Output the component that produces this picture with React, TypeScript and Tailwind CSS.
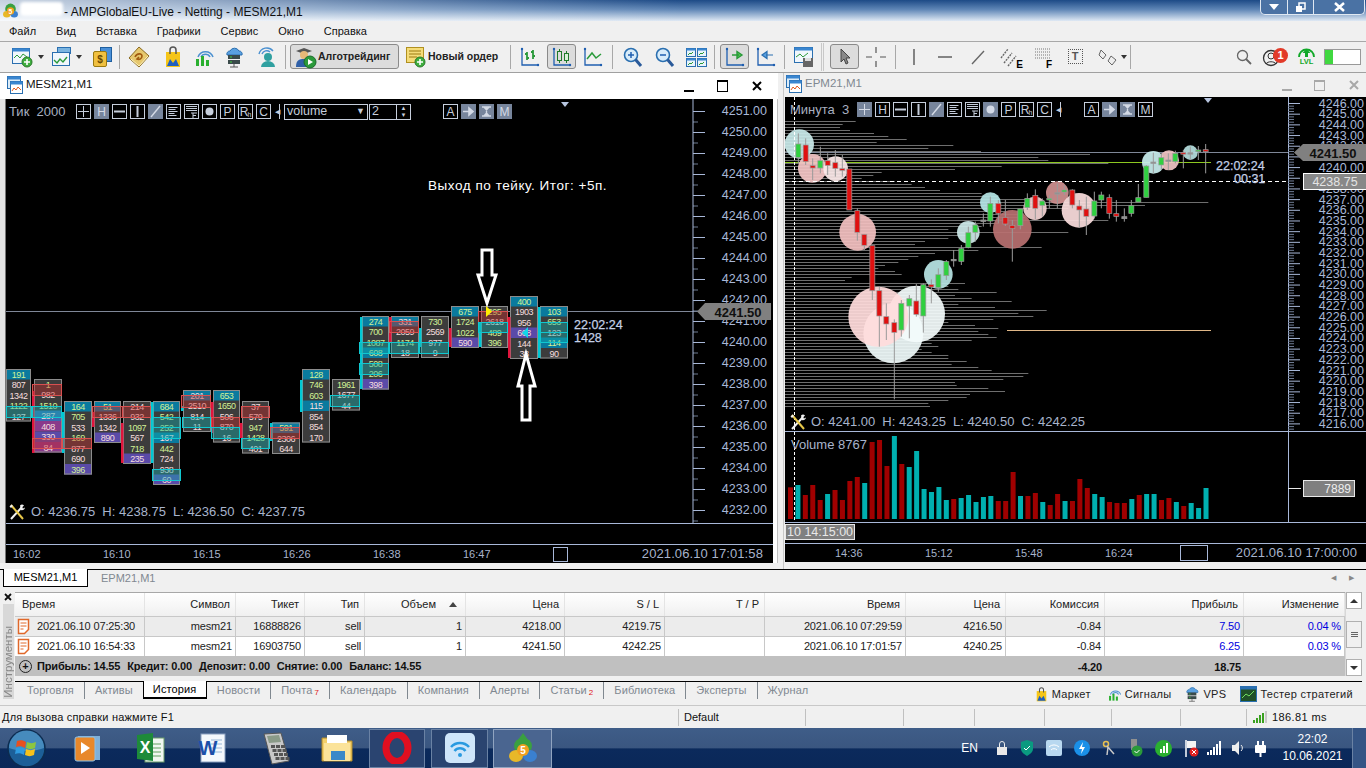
import React from 'react';

// ---------- chart data ----------
type Col = { x: number; y: number; w?: number; v: number[]; head?: boolean; foot?: boolean; bg?: Record<number, string> };

const footprint: Col[] = [
  { x: 6, y: 369, w: 25, v: [191, 807, 1342, 1122, 127], head: true },
  { x: 34, y: 379, v: [1, 982, 1510, 287, 408, 330, 84], bg: { 3: '#3a6ab0', 4: '#8a3a8a', 5: '#5a4aa8', 6: '#8a3a8a' } },
  { x: 64, y: 401, v: [164, 705, 533, 169, 877, 690, 396], head: true, foot: true },
  { x: 94, y: 401, w: 27, v: [51, 1336, 1342, 890], head: true, foot: true },
  { x: 123, y: 401, v: [214, 932, 1097, 567, 718, 235], foot: true },
  { x: 153, y: 401, w: 27, v: [684, 542, 252, 167, 442, 724, 938, 60], head: true, foot: true, bg: { 3: '#0a7a9e' } },
  { x: 183, y: 390, v: [201, 2510, 814, 11], head: true },
  { x: 213, y: 390, w: 27, v: [653, 1650, 506, 870, 16], head: true },
  { x: 242, y: 401, w: 27, v: [37, 579, 947, 1428, 401] },
  { x: 272, y: 422.5, v: [591, 2306, 644], head: true },
  { x: 302, y: 369, v: [128, 746, 603, 115, 854, 854, 170], head: true, bg: { 3: '#0a7a9e' } },
  { x: 332, y: 379, v: [1961, 1677, 44] },
  { x: 362, y: 316, w: 27, v: [274, 700, 1087, 608, 508, 206, 398], head: true, foot: true, bg: { 3: '#0a7a9e' } },
  { x: 391, y: 316, v: [331, 2059, 1174, 18], head: true },
  { x: 421, y: 316, v: [730, 2569, 977, 9] },
  { x: 451, y: 306, v: [675, 1724, 1022, 590], head: true, foot: true },
  { x: 481, y: 306, w: 27, v: [295, 2618, 489, 396] },
  { x: 510, y: 296, v: [400, 1903, 956, 668, 144, 38], head: true, bg: { 3: '#5a4aa8' } },
  { x: 540, y: 306, v: [103, 653, 123, 114, 90], head: true, bg: { 3: '#0a7a9e' } },
];

const greenVals = new Set([191, 1, 1122, 1510, 164, 705, 169, 51, 1097, 718, 684, 542, 252, 442, 653, 1650, 947, 1428, 591, 128, 746, 603, 1961, 274, 700, 1087, 608, 508, 206, 1174, 730, 1022, 675, 1724, 295, 489, 396, 400, 103, 114]);

const redBoxes = [[32, 384, 29, 11], [32, 438, 29, 10], [62, 438, 29, 10], [92, 406, 30, 11], [122, 406, 28, 11], [181, 395, 29, 12], [211, 417, 28, 10], [241, 406, 28, 11], [270, 427, 29, 11], [389, 321, 29, 11], [478, 311, 29, 11]];
const cyanBoxes = [[6, 406, 25, 11], [32, 406, 29, 11], [152, 417, 28, 10], [152, 427, 28, 11], [182, 417, 28, 10], [211, 427, 28, 11], [241, 438, 28, 10], [152, 469, 28, 11], [359, 342, 29, 11], [389, 342, 29, 11], [419, 342, 29, 11], [359, 363, 29, 11], [330, 395, 29, 11], [478, 322, 29, 10], [540, 322, 27, 10], [540, 332, 27, 10]];
const sideBars = [[32, 391, 62, 'r'], [62, 412, 41, 'c'], [92, 412, 15, 'r'], [121, 423, 40, 'r'], [151, 402, 61, 'c'], [181, 406, 5, 'c'], [211, 402, 31, 'r'], [240, 423, 15, 'r'], [270, 423, 18, 'c'], [300, 380, 32, 'c'], [360, 317, 72, 'c'], [389, 317, 25, 'r'], [419, 328, 19, 'c'], [449, 328, 19, 'r'], [479, 322, 25, 'c'], [508, 317, 41, 'r'], [538, 307, 51, 'c']] as [number, number, number, string][];

// x, bodyTop, bodyBottom, wickTop, wickBottom, colour: measured in a 3x crop, see px/py
const candles: [number, number, number, number, number, string][] = [
  [40, 72, 112, 40, 130, 'g'], [62, 75, 125, 55, 135, 'r'], [83, 137, 144, 115, 180, 'r'], [106, 122, 144, 80, 160, 'g'], [128, 122, 136, 100, 165, 'r'], [151, 128, 145, 90, 170, 'r'], [172, 146, 151, 105, 170, 'r'], [193, 147, 270, 147, 270, 'r'], [217, 272, 337, 265, 362, 'r'], [238, 343, 376, 343, 390, 'r'], [262, 377, 512, 377, 540, 'r'], [283, 512, 588, 500, 680, 'r'], [304, 590, 612, 550, 660, 'r'], [328, 608, 637, 598, 838, 'r'], [349, 550, 630, 540, 650, 'g'], [373, 536, 558, 525, 655, 'g'], [394, 543, 583, 492, 590, 'r'], [415, 494, 588, 490, 638, 'g'], [439, 494, 501, 478, 550, 'r'], [460, 464, 503, 445, 515, 'g'], [484, 425, 467, 420, 480, 'g'], [506, 418, 420, 390, 440, 'k'], [529, 386, 424, 375, 435, 'g'], [550, 338, 383, 320, 385, 'g'], [571, 315, 337, 305, 365, 'g'], [595, 300, 302, 280, 320, 'k'], [616, 250, 303, 230, 320, 'g'], [640, 250, 280, 240, 310, 'r'], [661, 292, 312, 240, 318, 'r'], [682, 316, 326, 300, 425, 'r'], [706, 267, 317, 267, 328, 'g'], [727, 235, 263, 220, 270, 'g'], [751, 226, 265, 208, 298, 'r'], [772, 243, 256, 235, 290, 'g'], [793, 235, 240, 225, 265, 'g'], [817, 218, 222, 190, 265, 'k'], [838, 210, 216, 195, 225, 'g'], [862, 210, 255, 208, 265, 'r'], [883, 258, 270, 240, 323, 'r'], [904, 267, 289, 230, 345, 'r'], [928, 243, 288, 215, 295, 'g'], [949, 225, 240, 215, 265, 'g'], [973, 233, 280, 223, 296, 'r'], [994, 281, 289, 240, 305, 'r'], [1018, 290, 296, 265, 305, 'k'], [1039, 257, 280, 240, 290, 'g'], [1060, 233, 246, 192, 246, 'g'], [1084, 138, 232, 135, 232, 'g'], [1105, 126, 130, 98, 160, 'k'], [1129, 113, 135, 100, 150, 'g'], [1150, 120, 122, 100, 150, 'k'], [1171, 100, 125, 92, 130, 'g'], [1195, 98, 102, 90, 145, 'r'], [1216, 98, 101, 80, 120, 'k'], [1240, 90, 95, 78, 120, 'g'], [1262, 89, 95, 72, 160, 'r'],
];

const bubbles: [number, number, number, string][] = [
  [325, 640, 90, '#eef9f9'], [395, 582, 85, '#f3fbfb'], [280, 590, 90, '#ffdcdc'], [43, 72, 44, '#c9eaea'], [82, 145, 43, '#f3c5c5'], [152, 146, 37, '#fbe8e8'], [218, 337, 55, '#f2c0c0'], [460, 463, 43, '#b8e4e4'], [550, 337, 34, '#cdeaea'], [616, 248, 31, '#b5e5e5'], [682, 328, 58, '#b87070'], [750, 265, 35, '#f4d4d4'], [817, 218, 34, '#d09090'], [882, 271, 52, '#fadddd'], [1105, 127, 34, '#c9eeee'], [1152, 121, 30, '#f0c4c4'], [1216, 98, 22, '#b5dede'],
];

const profile = [212, 173, 165, 195, 267, 310, 365, 275, 505, 430, 588, 915, 760, 790, 970, 650, 510, 290, 265, 230, 330, 380, 420, 465, 590, 640, 720, 1270, 1080, 850, 660, 700, 720, 970, 640, 590, 490, 850, 560, 490, 420, 390, 770, 580, 450, 400, 370, 340, 300, 280, 330, 350, 200, 180, 540, 490, 520, 635, 510, 560, 680, 520, 630, 785, 700, 745, 625, 490, 570, 640, 580, 610, 635, 560, 440, 460, 410, 440, 490, 490, 545, 500, 580, 620, 730, 715, 655, 510, 515, 610, 660, 555, 545, 490, 430, 435];

const volume: [number, string][] = [[172, 'r'], [165, 't'], [195, 'r'], [165, 'r'], [210, 'r'], [192, 't'], [180, 'r'], [210, 'r'], [153, 'r'], [141, 'r'], [159, 't'], [36, 'r'], [30, 'r'], [108, 'r'], [18, 't'], [102, 'r'], [111, 't'], [63, 't'], [177, 't'], [186, 't'], [171, 't'], [210, 't'], [207, 'r'], [204, 't'], [195, 't'], [216, 't'], [201, 't'], [198, 't'], [213, 'r'], [213, 'r'], [126, 'r'], [198, 't'], [198, 'r'], [189, 'r'], [216, 't'], [225, 'r'], [192, 'r'], [213, 't'], [213, 'r'], [147, 'r'], [174, 'r'], [192, 't'], [201, 't'], [216, 'r'], [219, 'r'], [219, 'r'], [207, 't'], [195, 'r'], [192, 't'], [192, 't'], [210, 'r'], [204, 'r'], [216, 't'], [228, 'r'], [219, 't'], [234, 't'], [174, 't']];

const range = (n: number) => Array.from({ length: n }, (_, i) => i);

// ---------- small glyphs for the chart panel buttons ----------
function Glyph({ name }: { name: string }) {
  const s = 'currentColor';
  return (
    <svg width="13" height="13" viewBox="0 0 13 13" fill="none" stroke={s}>
      {name === 'plus' && <path d="M6.5 1v11M1 6.5h11" />}
      {name === 'hline' && <path d="M1 6.5h11" strokeWidth="2" />}
      {name === 'vline' && <path d="M6.5 1v11" strokeWidth="2" />}
      {name === 'diag' && <path d="M2 12L11 1" strokeWidth="1.4" />}
      {name === 'lines' && <path d="M1.5 2.5h9M1.5 4.5h7M1.5 6.5h9M1.5 8.5h6M1.5 10.5h8" />}
      {name === 'flines' && <path d="M1 1.5h11M1 3.5h11M1 5.5h11M6 8h6M8 8v5M8 10.5h3" />}
      {name === 'dot' && <circle cx="6.5" cy="6.5" r="4" fill={s} stroke="none" />}
      {name === 'arrow' && <path d="M1 6.5h7M7 3l4 3.5-4 3.5z" fill={s} strokeWidth="1.6" />}
      {name === 'ibeam' && <path d="M2 2h9M2 11h9M6.5 2v9M4 2l2.5 3L9 2M4 11l2.5-3L9 11" strokeWidth="1.4" />}
    </svg>
  );
}

function Btn({ t, g, on }: { t?: React.ReactNode; g?: string; on?: boolean }) {
  return (
    <div className={`w-[15px] h-[15px] flex items-center justify-center border text-[12px] leading-none ${on ? 'bg-[#77859c] border-[#77859c] text-[#d4dae6]' : 'border-[#c6cedc] text-[#c6cedc]'}`}>
      {g ? <Glyph name={g} /> : t}
    </div>
  );
}

function Wrench({ className }: { className?: string }) {
  return (
    <svg className={className} width="18" height="18" viewBox="0 0 18 18" fill="none">
      <path d="M3 16L14 4" stroke="#f2f2f2" strokeWidth="2" />
      <path d="M12 2.5a3 3 0 0 1 4 0l-2 2 1 1 2-1a3 3 0 0 1-4 2.5z" fill="#f2f2f2" />
      <path d="M3 2l12 14" stroke="#e8c84a" strokeWidth="2" />
      <path d="M1.5 3.5L3.5 1.5 5 3 3 5z" fill="#f2f2f2" />
    </svg>
  );
}

// ---------- left chart ----------
function FootprintPlot() {
  return (
    <svg width="767" height="424" viewBox="6 99 767 424" className="block">
      <line x1="6" x2="700" y1="311.5" y2="311.5" stroke="#7f8798" />
      {range(20).map((i) => (
        <g key={i}>
          <line x1="693" x2="705" y1={111.5 + 21 * i} y2={111.5 + 21 * i} stroke="#a8b8d8" />
          <line x1="693" x2="698" y1={122 + 21 * i} y2={122 + 21 * i} stroke="#6f7c94" />
          <text x="767" y={111 + 21 * i} textAnchor="end" dominantBaseline="central" fontSize="12.5" fill="#a8b8d8">{(4251 - i).toFixed(2)}</text>
        </g>
      ))}
      <line x1="693" x2="693" y1="99" y2="523" stroke="#a8b8d8" />
      <polygon points="697,311.5 705,303 771,303 771,320 705,320" fill="#808080" />
      <text x="738" y="312" textAnchor="middle" dominantBaseline="central" fontSize="13" fontWeight="700" fill="#101010">4241.50</text>

      {footprint.map((c, k) => {
        const w = c.w ?? 28;
        const h = 10.5;
        return (
          <g key={k}>
            <rect x={c.x} y={c.y} width={w} height={c.v.length * h} fill="#3c3c3c" />
            {c.v.map((v, i) => {
              const fill = c.bg?.[i] ?? (c.head && i === 0 ? '#0a7a9e' : c.foot && i === c.v.length - 1 ? '#5a4aa8' : null);
              return (
                <g key={i}>
                  {fill && <rect x={c.x} y={c.y + i * h} width={w} height={h} fill={fill} />}
                  <text x={c.x + w / 2} y={c.y + i * h + h / 2 + 0.5} textAnchor="middle" dominantBaseline="central" fontSize="9" letterSpacing="-0.5" fill={greenVals.has(v) ? '#d2f296' : '#f6dede'}>{v}</text>
                </g>
              );
            })}
            <rect x={c.x + 0.5} y={c.y + 0.5} width={w - 1} height={c.v.length * h - 1} fill="none" stroke="#8c8c8c" />
          </g>
        );
      })}
      {sideBars.map(([x, y, h, t], i) => (
        <rect key={i} x={x} y={y} width="2.5" height={h} fill={t === 'r' ? '#e0143c' : '#00c8d4'} />
      ))}
      {redBoxes.map(([x, y, w, h], i) => (
        <rect key={i} x={x + 0.5} y={y + 0.5} width={w} height={h} fill="#c82828" fillOpacity="0.4" stroke="#d85050" />
      ))}
      {cyanBoxes.map(([x, y, w, h], i) => (
        <rect key={i} x={x + 0.5} y={y + 0.5} width={w} height={h} fill="#10b0b0" fillOpacity="0.4" stroke="#10c8d0" />
      ))}

      <polygon points="482,250 492,250 492,275 496,275 487,303 478,275 482,275" fill="#000" stroke="#fff" strokeWidth="3" />
      <polygon points="486,306 492,311.5 486,317" fill="#ffee00" />
      <polygon points="528,327 522,333 528,338" fill="#10d8e8" />
      <polygon points="522,420 530,420 530,386 535,386 526,354 518,386 522,386" fill="#000" stroke="#fff" strokeWidth="3" />

      <text x="428" y="185" dominantBaseline="central" fontSize="13.5" letterSpacing="0.55" fill="#fff">Выход по тейку. Итог: +5п.</text>
      <text x="574" y="324.5" dominantBaseline="central" fontSize="12.5" fill="#c4d0e6" stroke="#c4d0e6" strokeWidth="0.25">22:02:24</text>
      <text x="574" y="337.5" dominantBaseline="central" fontSize="12.5" fill="#c4d0e6" stroke="#c4d0e6" strokeWidth="0.25">1428</text>
    </svg>
  );
}

function LeftChart() {
  return (
    <div className="relative w-[767px] h-[464px] bg-black flex flex-col text-[#a8b4cc]">
      <FootprintPlot />
      <div className="absolute left-[3px] top-[5px] flex items-center h-[15px]">
        <div className="w-[67px] text-[13px] text-[#a8b0c0]">Тик&nbsp; 2000</div>
        <PanelBtns left />
        <div className="ml-[4px] w-[84px] h-[16px] border border-[#c6cedc] text-[12.5px] pl-[2px] flex items-center justify-between pr-[2px] text-[#c6cedc]">volume<span className="text-[9px]">▼</span></div>
        <div className="ml-[1px] w-[42px] h-[16px] border border-[#c6cedc] text-[12.5px] pl-[2px] flex items-center justify-between text-[#c6cedc]">
          2
          <div className="w-[14px] h-full border-l border-[#c6cedc] flex flex-col items-center justify-around text-[6px] leading-[6px]"><span>▲</span><span>▼</span></div>
        </div>
        <div className="ml-[32px] flex gap-[3px]">
          <Btn t="A" />
          <Btn g="arrow" on />
          <Btn g="ibeam" on />
          <Btn t="M" on />
        </div>
      </div>
      <div className="absolute left-[555px] top-[3px] w-0 h-0 border-x-[4px] border-x-transparent border-t-[5px] border-t-[#b8c6e0]" />
      <div className="absolute left-[2px] top-[404px] flex items-center gap-[5px] text-[13px] leading-none">
        <Wrench />
        <span className="flex gap-[7px] -mt-[1px]"><span>O: 4236.75</span><span>H: 4238.75</span><span>L: 4236.50</span><span>C: 4237.75</span></span>
      </div>
      <div className="h-[21px] border-t border-[#a8b8d8]" />
      <div className="h-[19px] border-t border-[#a8b8d8] flex items-center pl-[7px] text-[11px] relative">
        {['16:02', '16:10', '16:15', '16:26', '16:38', '16:47'].map((t) => (
          <div key={t} className="w-[90px]">{t}</div>
        ))}
        <div className="w-[15px] h-[15px] border border-[#a8b8d8]" />
        <div className="ml-auto pr-[10px] text-[13px] tracking-[0.1px]">2021.06.10 17:01:58</div>
      </div>
    </div>
  );
}

function PanelBtns({ left }: { left?: boolean }) {
  return (
    <div className="flex items-center gap-[3px]">
      <Btn g="plus" on={!left} />
      <Btn t="H" on={left} />
      <Btn g="hline" />
      <Btn g="vline" />
      <Btn g="diag" on />
      <Btn g="lines" />
      <Btn g="flines" />
      {left ? <Btn g="dot" /> : <Btn g="dot" on />}
      <Btn t="P" />
      <Btn t={<span className="flex items-end">R<span className="text-[7px] -ml-[1px]">h</span></span>} />
      <Btn t="C" />
      <div className="ml-[1px] w-[5px] h-[15px] border-r border-[#c6cedc] text-[#c6cedc] text-[7px] leading-[15px]">◀</div>
    </div>
  );
}

// ---------- right chart ----------
function CandlePlot() {
  const px = (z: number) => 785 + z / 3;
  const py = (z: number) => 120 + z / 3;
  return (
    <svg width="581" height="334" viewBox="785 97 581 334" className="block">
      {profile.map((l, i) => (
        <line key={i} x1="785" x2={785 + l / 3} y1={121.5 + 3 * i} y2={121.5 + 3 * i} stroke="#6e6e6e" />
      ))}
      <line x1="785" x2="1288" y1="152.5" y2="152.5" stroke="#7f8798" />
      <line x1="785" x2="1211" y1="162.5" y2="162.5" stroke="#8cc820" />
      <line x1="1007" x2="1211" y1="330.5" y2="330.5" stroke="#e0b888" />
      {bubbles.map(([x, y, r, c], i) => (
        <circle key={i} cx={px(x)} cy={py(y)} r={r / 3} fill={c} fillOpacity="0.93" />
      ))}
      <line x1="785" x2="1303" y1="181.5" y2="181.5" stroke="#fff" strokeDasharray="4 3" />
      <line x1="794.5" x2="794.5" y1="97" y2="431" stroke="#fff" strokeDasharray="3 2" />
      {candles.map(([x, t, b, wt, wb, c], i) => (
        <g key={i}>
          <line x1={px(x)} x2={px(x)} y1={py(wt)} y2={py(wb)} stroke="#9a9a9a" />
          <rect x={px(x) - 2.5} y={py(t)} width="5" height={Math.max((b - t) / 3, 1.5)} fill={c === 'r' ? '#e01010' : c === 'g' ? '#30d040' : '#909090'} stroke="#9a9a9a" strokeWidth="0.7" />
        </g>
      ))}

      <rect x="1288" y="97" width="78" height="334" fill="#000" />
      <line x1="1288.5" x2="1288.5" y1="97" y2="431" stroke="#a8b8d8" />
      {range(31).map((i) => {
        const y = 103.5 + 10.68 * i;
        const price = 4246 - i;
        return (
          <g key={i}>
            <line x1="1288" x2="1300" y1={y} y2={y} stroke="#a8b8d8" />
            <line x1="1288" x2="1294" y1={y + 2.7} y2={y + 2.7} stroke="#6f7c94" />
            <line x1="1288" x2="1294" y1={y + 5.3} y2={y + 5.3} stroke="#6f7c94" />
            <line x1="1288" x2="1294" y1={y + 8} y2={y + 8} stroke="#6f7c94" />
            {/* 4241 and 4239 sit under the two price tags */}
            {price !== 4241 && price !== 4239 && (
              <text x="1364" y={y} textAnchor="end" dominantBaseline="central" fontSize="12.5" fill="#a8b8d8">{price.toFixed(2)}</text>
            )}
          </g>
        );
      })}
      <polygon points="1294,152.5 1303,144 1366,144 1366,161 1303,161" fill="#808080" />
      <text x="1333" y="153" textAnchor="middle" dominantBaseline="central" fontSize="13" fontWeight="700" fill="#101010">4241.50</text>
      <rect x="1303.5" y="173.5" width="63" height="16" fill="#888" stroke="#fff" />
      <text x="1335" y="181.5" textAnchor="middle" dominantBaseline="central" fontSize="12.5" fill="#e4e4e4">4238.75</text>

      <text x="1216" y="166" dominantBaseline="central" fontSize="12.5" fill="#c4d0e6" stroke="#c4d0e6" strokeWidth="0.25">22:02:24</text>
      <rect x="1232" y="173" width="34" height="8" fill="#000" />
      <text x="1234" y="178.5" dominantBaseline="central" fontSize="12.5" fill="#c4d0e6" stroke="#c4d0e6" strokeWidth="0.25">00:31</text>
    </svg>
  );
}

function VolumePlot() {
  return (
    <svg width="581" height="90" viewBox="785 432 581 90" className="block">
      <line x1="794.5" x2="794.5" y1="432" y2="522" stroke="#fff" strokeDasharray="3 2" />
      {volume.map(([t, c], i) => {
        const y = 430 + t / 3;
        return <rect key={i} x={788 + 7.42 * i} y={y} width="5" height={519 - y} fill={c === 'r' ? '#a00000' : '#00b0b0'} />;
      })}
      <line x1="1288.5" x2="1288.5" y1="432" y2="522" stroke="#a8b8d8" />
      <line x1="1288" x2="1301" y1="488.5" y2="488.5" stroke="#e8e8e8" />
      <rect x="1303.5" y="480.5" width="51" height="16" fill="#808080" stroke="#e8e8e8" />
      <text x="1351" y="489" textAnchor="end" dominantBaseline="central" fontSize="12" fill="#eee">7889</text>
    </svg>
  );
}

function RightChart() {
  return (
    <div className="relative w-[581px] h-[465px] bg-black flex flex-col text-[#a8b4cc]">
      <CandlePlot />
      <div className="absolute left-[5px] top-[5px] flex items-center h-[15px]">
        <div className="w-[67px] text-[13px] text-[#a8b0c0]">Минута&nbsp; 3</div>
        <PanelBtns />
        <div className="ml-[23px] flex gap-[3px]">
          <Btn t="A" />
          <Btn g="arrow" on />
          <Btn g="ibeam" on />
          <Btn t="M" />
        </div>
      </div>
      <div className="absolute left-[419px] top-[1px] w-0 h-0 border-x-[4px] border-x-transparent border-t-[5px] border-t-[#b8c6e0]" />
      <div className="absolute left-[4px] top-[316px] flex items-center gap-[4px] text-[13px] leading-none">
        <Wrench />
        <span className="flex gap-[7px] -mt-[1px]"><span>O: 4241.00</span><span>H: 4243.25</span><span>L: 4240.50</span><span>C: 4242.25</span></span>
      </div>
      <div className="absolute left-[6px] top-[341px] text-[13px] leading-none">Volume 8767</div>
      <div className="border-t border-[#a8b8d8]"><VolumePlot /></div>
      <div className="h-[21px] border-t border-[#a8b8d8] relative">
        <div className="absolute left-0 top-[1px] w-[70px] h-[16px] bg-[#808080] border border-[#e8e8e8] text-[#e8e8e8] text-[12.5px] leading-[14px] pl-[1px] whitespace-nowrap overflow-hidden">10 14:15:00</div>
      </div>
      <div className="h-[19px] border-t border-[#a8b8d8] flex items-center pl-[50px] text-[11px]">
        {['14:36', '15:12', '15:48', '16:24'].map((t) => (
          <div key={t} className="w-[90px]">{t}</div>
        ))}
        <div className="w-[28px] h-[16px] -ml-[15px] border border-[#a8b8d8]" />
        <div className="ml-auto pr-[9px] text-[13px] tracking-[0.1px]">2021.06.10 17:00:00</div>
      </div>
    </div>
  );
}

// ---------- toolbar icons ----------
const Ico = ({ children, className = '' }: { children: React.ReactNode; className?: string }) => (
  <svg className={`shrink-0 ${className}`} width="22" height="22" viewBox="0 0 22 22" fill="none">{children}</svg>
);

const PlusBadge = () => (
  <g>
    <circle cx="16" cy="16" r="5" fill="#3fae3f" stroke="#2a7a2a" />
    <path d="M13 16h6M16 13v6" stroke="#fff" strokeWidth="1.6" />
  </g>
);

const NewChart = () => (
  <Ico>
    <rect x="1.5" y="2.5" width="17" height="15" fill="#f0f6fc" stroke="#2a6fb0" />
    <rect x="1.5" y="2.5" width="17" height="3" fill="#3a86d0" />
    <path d="M3 12l3-3 3 3 3-4 4 3" stroke="#2a9a3a" />
    <PlusBadge />
  </Ico>
);
const Profiles = () => (
  <Ico>
    <rect x="6.5" y="1.5" width="13" height="6" fill="#7ab4e0" stroke="#2a6fb0" />
    <rect x="1.5" y="6.5" width="17" height="13" fill="#f0f6fc" stroke="#2a6fb0" />
    <path d="M3 14l3 3 3-4 3 3 4-5" stroke="#2a9a3a" strokeWidth="1.4" />
  </Ico>
);
const Money = () => (
  <Ico>
    <rect x="9.5" y="1.5" width="11" height="14" fill="#4a90d8" stroke="#1f5f9f" />
    <rect x="2.5" y="5.5" width="13" height="15" rx="1.5" fill="#f0c040" stroke="#9a7a10" />
    <text x="9" y="17" textAnchor="middle" fontSize="10" fill="#6a4a00" fontWeight="700">$</text>
  </Ico>
);
const Book = () => (
  <Ico>
    <path d="M11 1l10 9-10 11L1 12z" fill="#e6c86e" stroke="#8a6a20" />
    <path d="M3 13l8 7 9-10" stroke="#fff3c0" />
    <path d="M7 11c2-4 7-4 7-1s-3 4-5 3l2-2" stroke="#a05a10" strokeWidth="1.6" />
  </Ico>
);
const Bag = ({ s = 22 }: { s?: number }) => (
  <svg className="shrink-0" width={s} height={s} viewBox="0 0 22 22" fill="none">
    <rect x="4" y="6" width="14" height="15" fill="#f5c518" />
    <path d="M8 8V4a3 3 0 0 1 6 0v4" stroke="#555" strokeWidth="1.5" />
    <path d="M5 20l3-7 3 4 3-4 3 7z" fill="#1f5fc0" />
  </svg>
);
const Signal = ({ s = 22 }: { s?: number }) => (
  <svg className="shrink-0" width={s} height={s} viewBox="0 0 22 22" fill="none">
    <path d="M5 11a8 8 0 0 1 15 0M8 11a5 5 0 0 1 9 0" stroke="#4a90d0" strokeWidth="1.5" />
    <rect x="3" y="13" width="3" height="7" fill="#2ab030" />
    <rect x="8" y="10" width="3" height="10" fill="#2ab030" />
    <rect x="13" y="14" width="3" height="6" fill="#2ab030" />
  </svg>
);
const Vps = ({ s = 22 }: { s?: number }) => (
  <svg className="shrink-0" width={s} height={s} viewBox="0 0 22 22" fill="none">
    <path d="M4 9a3 3 0 0 1 3-4 5 5 0 0 1 9 0 3 3 0 0 1 3 4z" fill="#5aa0e0" stroke="#2a6fb0" />
    <rect x="5" y="9" width="12" height="4" fill="#3a4a4a" />
    <rect x="5" y="14" width="12" height="4" fill="#3a4a4a" />
    <path d="M7 11h2M7 16h2" stroke="#40d040" />
    <path d="M11 18v3M7 21h8" stroke="#555" />
  </svg>
);
const Person = () => (
  <Ico>
    <path d="M3 8a8 8 0 0 1 14-3M6 8a5 5 0 0 1 8-2" stroke="#4a90d0" strokeWidth="1.4" />
    <circle cx="12" cy="11" r="4" fill="#30a0a0" />
    <path d="M5 21a7 6 0 0 1 14 0z" fill="#30a0a0" />
  </Ico>
);
const Algo = () => (
  <svg className="shrink-0" width="24" height="24" viewBox="0 0 24 24" fill="none">
    <path d="M3 6l8-3 8 3-8 3z" fill="#555" />
    <circle cx="11" cy="10" r="4" fill="#e8b878" />
    <path d="M3 22c0-7 3-8 8-8s6 2 6 8z" fill="#3060a8" />
    <circle cx="17" cy="17" r="6" fill="#2a9a3a" stroke="#1a6a2a" />
    <path d="M15 14l5 3-5 3z" fill="#fff" />
  </svg>
);
const NewOrder = () => (
  <Ico>
    <rect x="2.5" y="1.5" width="17" height="15" fill="#f5dc78" stroke="#b09020" />
    <path d="M5 5h12M5 8h12M5 11h8" stroke="#9a7a10" />
    <PlusBadge />
  </Ico>
);
const Axes = ({ children }: { children: React.ReactNode }) => (
  <Ico>
    <path d="M3 2v17h17" stroke="#1f5fb0" strokeWidth="1.3" />
    <circle cx="3" cy="3" r="1.2" fill="#1f5fb0" />
    <circle cx="19" cy="19" r="1.2" fill="#1f5fb0" />
    {children}
  </Ico>
);
const Zoom = ({ plus }: { plus?: boolean }) => (
  <Ico>
    <circle cx="9" cy="9" r="6.5" fill="#d8ecfa" stroke="#2a6fb0" strokeWidth="1.6" />
    <path d="M6 9h6" stroke="#1f5fb0" strokeWidth="1.5" />
    {plus && <path d="M9 6v6" stroke="#1f5fb0" strokeWidth="1.5" />}
    <path d="M13.5 13.5L19 20" stroke="#2a5a9a" strokeWidth="3" />
  </Ico>
);
const Tile = () => (
  <Ico>
    {[[1, 2], [12, 2], [1, 12], [12, 12]].map(([x, y]) => (
      <g key={`${x}${y}`}>
        <rect x={x + 0.5} y={y + 0.5} width="9" height="8" fill="#e8f3fb" stroke="#2a6fb0" />
        <rect x={x + 0.5} y={y + 0.5} width="9" height="2" fill="#3a86d0" />
        <path d={`M${x + 2} ${y + 7}l2-2 1 1 2-2`} stroke="#2a9a3a" />
      </g>
    ))}
  </Ico>
);
const Save = () => (
  <Ico>
    <rect x="1.5" y="1.5" width="18" height="15" fill="#f0f6fc" stroke="#2a6fb0" />
    <rect x="1.5" y="1.5" width="18" height="3" fill="#3a86d0" />
    <path d="M3 11l4-3 3 3 5-4" stroke="#2a9a3a" />
    <rect x="10" y="12" width="10" height="9" fill="#666" />
    <rect x="12" y="12" width="6" height="3" fill="#ddd" />
  </Ico>
);
const Sep = ({ className }: { className: string }) => <div className={`w-px h-[24px] bg-[#a8a8a8] shrink-0 ${className}`} />;
const Caret = ({ className }: { className: string }) => <div className={`w-[7px] flex justify-center shrink-0 ${className}`}><div className="w-0 h-0 border-x-[3.5px] border-x-transparent border-t-[4px] border-t-[#333]" /></div>;
const ActiveBtn = ({ children, className }: { children: React.ReactNode; className: string }) => (
  <div className={`h-[25px] shrink-0 flex items-center rounded-[3px] border border-[#8a8a8a] bg-[#dcdcdc] ${className}`}>{children}</div>
);

function Toolbar() {
  return (
    <div className="h-[31px] flex items-center border-b border-[#a0a0a0] bg-[#f0f0f0] pb-[1px]">
      <div className="ml-[11px]"><NewChart /></div>
      <Caret className="ml-[4px]" />
      <div className="ml-[7px]"><Profiles /></div>
      <Caret className="ml-[2px]" />
      <div className="ml-[9px]"><Money /></div>
      <Sep className="ml-[6px]" />
      <div className="ml-[8px]"><Book /></div>
      <div className="ml-[12px]"><Bag /></div>
      <div className="ml-[9px]"><Signal /></div>
      <div className="ml-[8px]"><Vps /></div>
      <div className="ml-[11px]"><Person /></div>
      <Sep className="ml-[7px]" />
      <ActiveBtn className="ml-[4px] w-[109px] pl-[2px] gap-[1px] font-bold text-[10.5px] text-[#222]"><Algo /><span>Алготрейдинг</span></ActiveBtn>
      <div className="ml-[5px]"><NewOrder /></div>
      <span className="ml-[2px] w-[75px] font-bold text-[10.5px] text-[#222] whitespace-nowrap">Новый ордер</span>
      <Sep className="ml-[7px]" />
      <div className="ml-[8px]"><Axes><path d="M8 6v8M6 8h2M8 12h2M14 4v9M12 6h2M14 10h2" stroke="#2a9a3a" strokeWidth="1.8" /></Axes></div>
      <ActiveBtn className="ml-[6px] w-[29px] justify-center"><Axes><path d="M8.5 3v14M15.5 5v12" stroke="#1f7a2a" /><rect x="6.5" y="5.5" width="4" height="9" fill="#dcdcdc" stroke="#1f7a2a" /><rect x="13.5" y="7.5" width="4" height="7" fill="#d8f0d8" stroke="#1f7a2a" /></Axes></ActiveBtn>
      <div className="ml-[6px]"><Axes><path d="M5 13l5-6 4 5 5-4" stroke="#2a9a3a" strokeWidth="1.5" /></Axes></div>
      <Sep className="ml-[8px]" />
      <div className="ml-[9px]"><Zoom plus /></div>
      <div className="ml-[10px]"><Zoom /></div>
      <div className="ml-[9px]"><Tile /></div>
      <Sep className="ml-[7px]" />
      <ActiveBtn className="ml-[5px] w-[29px] justify-center"><Axes><path d="M8 9h7M13 5.5l5 3.5-5 3.5z" fill="#50c850" stroke="#2a9a3a" strokeWidth="1.4" /></Axes></ActiveBtn>
      <div className="ml-[6px]"><Axes><path d="M18 9h-7M12 5.5L7 9l5 3.5z" fill="#5aa0e0" stroke="#2a6fb0" strokeWidth="1.2" /></Axes></div>
      <Sep className="ml-[7px]" />
      <div className="ml-[8px]"><Save /></div>
      <div className="ml-[6px] w-[3px] h-[28px] border-x border-[#c8c8c8] shrink-0" />
      <ActiveBtn className="ml-[6px] w-[29px] justify-center"><svg width="16" height="18" viewBox="0 0 16 18"><path d="M4 1v13l3-3 2 5 2-1-2-5h4z" fill="#888" stroke="#444" /></svg></ActiveBtn>
      <div className="ml-[6px]"><Ico><path d="M11 1v6M11 15v6M1 11h6M15 11h6" stroke="#555" strokeWidth="1.2" /></Ico></div>
      <Sep className="ml-[8px]" />
      <div className="ml-[7px]"><Ico><path d="M11 3v16" stroke="#555" strokeWidth="1.4" /></Ico></div>
      <div className="ml-[9px]"><Ico><path d="M4 11h14" stroke="#555" strokeWidth="1.4" /></Ico></div>
      <div className="ml-[11px]"><Ico><path d="M5 18L17 5" stroke="#666" strokeWidth="1.4" /></Ico></div>
      <div className="ml-[10px] relative"><Ico><path d="M2 12l7-9M5 17l8-10M9 20l8-10" stroke="#666" strokeWidth="1.4" strokeDasharray="2 1" /></Ico><span className="absolute right-[-2px] bottom-[-2px] text-[10px] font-bold text-black leading-none">E</span></div>
      <div className="ml-[12px] relative"><Ico><path d="M2 3h16M2 6h16M2 9h16M2 12h16" stroke="#777" strokeDasharray="1 1" /></Ico><span className="absolute right-[3px] bottom-[-2px] text-[10px] font-bold text-black leading-none">F</span></div>
      <div className="ml-[9px] w-[22px] flex justify-center"><div className="w-[15px] h-[15px] border border-dotted border-[#555] flex items-center justify-center text-[11px] font-bold text-[#555] leading-none">T</div></div>
      <div className="ml-[11px]"><Ico><path d="M4 4l5 5-3 4-4-4zM14 10l5 4-4 5-4-4z" fill="#eee" stroke="#666" /></Ico></div>
      <Caret className="ml-[1px]" />
      <Sep className="ml-[3px]" />
      <div className="ml-[105px]"><svg width="16" height="16" viewBox="0 0 16 16" fill="none"><circle cx="6.5" cy="6.5" r="5" stroke="#666" strokeWidth="1.3" /><path d="M10 10l5 5" stroke="#666" strokeWidth="1.8" /></svg></div>
      <div className="ml-[10px] relative w-[26px] h-[20px]">
        <svg width="18" height="18" viewBox="0 0 18 18" fill="none" className="mt-[2px]"><circle cx="9" cy="9" r="7.5" stroke="#333" strokeWidth="1.3" /><circle cx="9" cy="7" r="3" stroke="#333" /><path d="M4 15c1-3 9-3 10 0" stroke="#333" /></svg>
        <div className="absolute right-0 top-[1px] w-[15px] h-[15px] rounded-full bg-[#e23a28] text-white text-[11px] font-bold flex items-center justify-center leading-none">1</div>
      </div>
      <div className="ml-[10px] w-[17px] flex flex-col items-center">
        <svg width="17" height="11" viewBox="0 0 17 11" fill="none"><path d="M1 10a7.5 7.5 0 0 1 15 0" stroke="#10a828" strokeWidth="1.8" /><path d="M8.5 2l4 4h-2.5v4H7V6H4.5z" fill="#10a828" /></svg>
        <span className="text-[7.5px] font-bold text-[#10a828] leading-[8px]">LVL</span>
      </div>
      <div className="ml-[9px] w-[37px] h-[16px] border border-[#999] bg-white"><div className="w-[8px] h-full bg-[#40d840]" /></div>
    </div>
  );
}

function WindowIcon() {
  return (
    <svg width="17" height="20" viewBox="0 0 17 20" fill="none" className="shrink-0">
      <rect x="0.5" y="0.5" width="13" height="12" fill="#dcecf8" stroke="#2a6fb0" />
      <rect x="0.5" y="0.5" width="13" height="3" fill="#3a86d0" />
      <rect x="3.5" y="5.5" width="12" height="12" fill="#fff" stroke="#2a6fb0" />
      <rect x="3.5" y="5.5" width="12" height="3" fill="#3a86d0" />
      <path d="M5 15l2-3 2 2 2-3 3 3" stroke="#e05a20" />
    </svg>
  );
}

function LeftWindow() {
  return (
    <div className="w-[778px] h-full flex flex-col bg-[#f0f0f0]">
      <div className="h-[26px] bg-white flex items-center pl-[7px] pr-[16px] text-[11.5px] text-[#111] relative">
        <WindowIcon />
        <span className="ml-[2px] -mt-[2px]">MESM21,M1</span>
        <div className="ml-auto flex items-center text-black">
          <div className="w-[10px] h-[2px] bg-black mt-[9px]" />
          <div className="ml-[23px] w-[11px] h-[12px] border border-black border-t-2" />
          <svg className="ml-[24px]" width="10" height="10" viewBox="0 0 10 10"><path d="M1 1l8 8M9 1l-8 8" stroke="#000" strokeWidth="2" /></svg>
        </div>
      </div>
      <div className="flex h-[464px]">
        <div className="w-[6px] bg-[#e4e4e4] border-r border-[#777]" />
        <LeftChart />
        <div className="w-[5px] bg-white border-r border-[#c0c0c0]" />
      </div>
    </div>
  );
}

function RightWindow() {
  return (
    <div className="ml-[5px] w-[583px] h-full flex flex-col bg-[#f0f0f0] border-l border-[#c8c8c8]">
      <div className="h-[24px] flex items-center pl-[2px] pr-[7px] text-[11.5px] text-[#808890]">
        <WindowIcon />
        <span className="ml-[2px] -mt-[2px]">EPM21,M1</span>
        <div className="ml-auto flex items-center">
          <div className="w-[10px] h-[2px] bg-[#a8a8a8] mt-[9px]" />
          <div className="ml-[22px] w-[11px] h-[11px] border border-[#a8a8a8] border-t-2" />
          <svg className="ml-[24px]" width="10" height="10" viewBox="0 0 10 10"><path d="M1 1l8 8M9 1l-8 8" stroke="#a8a8a8" strokeWidth="2" /></svg>
        </div>
      </div>
      <div className="pl-[1px]"><RightChart /></div>
    </div>
  );
}

// ---------- terminal (bottom) panel ----------
const colW = ['w-[130px]', 'w-[91px]', 'w-[69px]', 'w-[60px]', 'w-[101px]', 'w-[99px]', 'w-[100px]', 'w-[100px]', 'w-[141px]', 'w-[100px]', 'w-[99px]', 'w-[139px]', 'w-[101px]'];
const headers = ['Время', 'Символ', 'Тикет', 'Тип', 'Объем', 'Цена', 'S / L', 'T / P', 'Время', 'Цена', 'Комиссия', 'Прибыль', 'Изменение'];
const rows = [
  ['2021.06.10 07:25:30', 'mesm21', '16888826', 'sell', '1', '4218.00', '4219.75', '', '2021.06.10 07:29:59', '4216.50', '-0.84', '7.50', '0.04 %'],
  ['2021.06.10 16:54:33', 'mesm21', '16903750', 'sell', '1', '4241.50', '4242.25', '', '2021.06.10 17:01:57', '4240.25', '-0.84', '6.25', '0.03 %'],
];

function DealIcon() {
  return (
    <svg width="13" height="17" viewBox="0 0 13 17" fill="none" className="shrink-0">
      <path d="M1.5 1.5h10v10l-4 4h-6z" fill="#fff" stroke="#e0682a" strokeWidth="1.5" />
      <path d="M3.5 5h6M3.5 8h6M3.5 11h3" stroke="#e0682a" />
    </svg>
  );
}

function HistoryTable() {
  return (
    <div className="w-[1330px]">
      <div className="h-[24px] flex bg-gradient-to-b from-white to-[#f0f0f0] border-t border-[#a8a8a8] text-[#222]">
        {headers.map((h, i) => (
          <div key={i} className={`${colW[i]} flex items-center border-r border-[#e4e4e4] ${i === 0 ? 'pl-[7px]' : 'justify-end pr-[5px]'} ${i === 4 ? 'pr-[8px] gap-[13px]' : ''}`}>
            {h}
            {i === 4 && <div className="w-0 h-0 border-x-[4px] border-x-transparent border-b-[5px] border-b-[#444]" />}
          </div>
        ))}
      </div>
      {rows.map((r, k) => (
        <div key={k} className={`h-[20px] flex border-t border-[#c8c8c8] text-[#222] tracking-[-0.15px] ${k === 0 ? 'bg-[#ececec]' : 'bg-white'}`}>
          {r.map((c, i) => (
            <div key={i} className={`${colW[i]} flex items-center border-r border-[#c8c8c8] ${i === 0 ? 'pl-[2px] gap-[7px]' : 'justify-end pr-[3px]'} ${i >= 11 ? 'text-[#0000e0]' : ''}`}>
              {i === 0 && <DealIcon />}
              {c}
            </div>
          ))}
        </div>
      ))}
      <div className="h-[20px] flex items-center bg-[#c0c0c0] font-bold text-[#111] relative tracking-[-0.17px]">
        <div className="ml-[4px] w-[13px] h-[13px] rounded-full border border-[#222] flex items-center justify-center text-[11px] leading-none">+</div>
        <div className="ml-[5px] flex gap-[7px]">
          <span>Прибыль: 14.55</span><span>Кредит: 0.00</span><span>Депозит: 0.00</span><span>Снятие: 0.00</span><span>Баланс: 14.55</span>
        </div>
        <div className="absolute right-[243px] top-[3px]">-4.20</div>
        <div className="absolute right-[104px] top-[3px]">18.75</div>
      </div>
    </div>
  );
}

function Scrollbar() {
  return (
    <div className="w-[17px] h-[84px] bg-[#f0f0f0] border-l border-[#d8d8d8] flex flex-col justify-between text-[#444]">
      <div className="h-[17px] border border-[#b0b0b0] bg-white flex items-center justify-center"><div className="w-0 h-0 border-x-[4px] border-x-transparent border-b-[4px] border-b-[#333]" /></div>
      <div className="h-[27px] border border-[#b0b0b0] bg-[#f0f0f0] flex flex-col items-center justify-center gap-[1px]"><div className="w-[7px] h-px bg-[#666]" /><div className="w-[7px] h-px bg-[#666]" /><div className="w-[7px] h-px bg-[#666]" /></div>
      <div className="h-[17px] border border-[#b0b0b0] bg-white flex items-center justify-center"><div className="w-0 h-0 border-x-[4px] border-x-transparent border-t-[4px] border-t-[#333]" /></div>
    </div>
  );
}

const toolTabs: [string, string?][] = [['Торговля'], ['Активы'], ['История'], ['Новости'], ['Почта', '7'], ['Календарь'], ['Компания'], ['Алерты'], ['Статьи', '2'], ['Библиотека'], ['Эксперты'], ['Журнал']];

function ToolTabs() {
  return (
    <div className="h-[23px] flex items-start border-t border-black text-[#808890] relative">
      <div className="flex items-center pl-[2px] h-[17px] tracking-[0.12px]">
        {toolTabs.map(([t, n], i) => {
          const active = t === 'История';
          const noSep = i === 1 || active || i === toolTabs.length - 1;
          return (
            <div key={t} className={`flex items-center h-[17px] ${active ? 'bg-white text-black border-x border-b-2 border-black px-[9px] -mt-[1px] h-[18px] w-[64px]' : 'px-[10px]'} ${!noSep ? 'border-r border-[#808890]' : ''}`}>
              {t}
              {n && <span className="ml-[2px] mt-[5px] text-[8px] text-[#e01818] leading-none">{n}</span>}
            </div>
          );
        })}
      </div>
      <div className="ml-auto flex items-center gap-[3px] pr-[9px] pt-[4px] text-[#222] tracking-[0.3px]">
        <Bag s={15} /><span className="mr-[13px]">Маркет</span>
        <Signal s={15} /><span className="mr-[10px]">Сигналы</span>
        <Vps s={16} /><span className="mr-[11px]">VPS</span>
        <svg width="17" height="16" viewBox="0 0 17 16" fill="none" className="shrink-0"><rect x="0.5" y="0.5" width="16" height="15" fill="#205028" stroke="#2a6fb0" /><rect x="0.5" y="0.5" width="16" height="3" fill="#2a6fb0" /><path d="M2 12l4-4 3 2 5-5" stroke="#70e060" /></svg>
        <span>Тестер стратегий</span>
      </div>
    </div>
  );
}

function Toolbox() {
  return (
    <div className="h-[118px] flex bg-[#f0f0f0]">
      <div className="w-[15px] flex flex-col items-center">
        <svg className="mt-[6px] ml-[1px]" width="8" height="8" viewBox="0 0 8 8"><path d="M1 1l6 6M7 1L1 7" stroke="#111" strokeWidth="1.8" /></svg>
        <div className="mt-[3px] w-[11px] ml-[2px] h-[95px] bg-[#d8d8d8] text-[#888] text-[11.5px] flex items-end justify-center pb-[1px]">
          <span className="[writing-mode:vertical-rl] rotate-180 whitespace-nowrap leading-none">Инструменты</span>
        </div>
      </div>
      <div className="w-[1347px] flex flex-col pt-[5px]">
        <div className="h-[84px] flex">
          <HistoryTable />
          <Scrollbar />
        </div>
        <div className="h-[5px]" />
        <ToolTabs />
      </div>
    </div>
  );
}

function StatusBar() {
  const cell = 'border-r border-[#c0c0c0] h-[17px] shrink-0';
  return (
    <div className="h-[23px] flex items-center border-t border-[#c8c8c8] text-[#111] bg-[#f0f0f0]">
      <div className={`w-[679px] pl-[2px] tracking-[0.2px] ${cell}`}>Для вызова справки нажмите F1</div>
      <div className={`w-[127px] pl-[5px] ${cell}`}>Default</div>
      <div className={`w-[98px] ${cell}`} />
      <div className={`w-[71px] ${cell}`} />
      <div className={`w-[70px] ${cell}`} />
      <div className={`w-[67px] ${cell}`} />
      <div className={`w-[69px] ${cell}`} />
      <div className={`w-[66px] ${cell}`} />
      <div className="flex items-center pl-[6px] gap-[5px]">
        <svg width="14" height="12" viewBox="0 0 14 12"><rect x="0" y="9" width="2" height="3" fill="#3aa020" /><rect x="3" y="7" width="2" height="5" fill="#3aa020" /><rect x="6" y="4" width="2" height="8" fill="#3aa020" /><rect x="9" y="2" width="2" height="10" fill="#3aa020" /><rect x="12" y="0" width="2" height="12" fill="#c8c8c8" /></svg>
        <span className="tracking-[0.4px]">186.81 ms</span>
      </div>
    </div>
  );
}

// ---------- taskbar ----------
function Taskbar() {
  const box = 'shrink-0';
  return (
    <div className="h-[40px] flex items-center relative text-white bg-[linear-gradient(to_bottom,#3f5d88_0%,#3a5680_50%,#0b2a5c_52%,#0a2858_100%)]">
      <svg className={`${box} ml-[7px]`} width="39" height="39" viewBox="0 0 39 39">
        <circle cx="19.5" cy="19.5" r="18.5" fill="#1c5f98" stroke="#0c2c50" strokeWidth="1.5" />
        <path d="M2 19a17 17 0 0 1 35 0c-10 4-25 4-35 0z" fill="#6aaedc" fillOpacity="0.55" />
        <path d="M10 12c3-1 6-1 9 1l-1 6c-3-2-6-2-9-1z" fill="#e8501f" />
        <path d="M20 13c3 1.5 6 1.5 9 0l-1 6c-3 1.5-6 1.5-9 0z" fill="#8cc63f" />
        <path d="M9 19c3-1 6-1 9 1l-1 6c-3-2-6-2-9-1z" fill="#2f9be0" />
        <path d="M19 20c3 1.5 6 1.5 9 0l-1 6c-3 1.5-6 1.5-9 0z" fill="#f7c21a" />
      </svg>
      <svg className={`${box} ml-[28px]`} width="27" height="30" viewBox="0 0 27 30">
        <rect x="4" y="3" width="22" height="24" fill="#7fb0d8" />
        <rect x="1" y="4" width="20" height="24" rx="2" fill="#e8882a" stroke="#8ac0e8" />
        <path d="M7 9l9 6-9 6z" fill="#fff" />
      </svg>
      <svg className={`${box} ml-[34px]`} width="30" height="32" viewBox="0 0 30 32">
        <rect x="10" y="6" width="19" height="24" fill="#f0f6f0" stroke="#6a9a6a" />
        <path d="M16 12h10M16 16h10M16 20h10M16 24h10" stroke="#60a060" />
        <path d="M2 3l16-2v28L2 27z" fill="#1e8a3a" />
        <text x="10" y="21" textAnchor="middle" fontSize="16" fontWeight="700" fill="#fff">X</text>
      </svg>
      <svg className={`${box} ml-[32px]`} width="29" height="32" viewBox="0 0 29 32">
        <rect x="4" y="2" width="24" height="28" fill="#f4f8fc" stroke="#8aa0c0" />
        <path d="M14 8h11M14 12h11M14 16h11M14 20h11" stroke="#9ab8d8" />
        <text x="11" y="23" textAnchor="middle" fontSize="20" fontWeight="700" fill="#1c4fa8">W</text>
      </svg>
      <svg className={`${box} ml-[34px]`} width="30" height="33" viewBox="0 0 30 33">
        <path d="M4 2l17-1 8 28-17 3z" fill="#c8c8c8" stroke="#555" />
        <path d="M7 4l12-1 2 7-12 1z" fill="#8a9a88" />
        {range(4).map((r) => range(3).map((c) => <rect key={`${r}${c}`} x={11 + c * 5 + r * 1.5} y={13 + r * 4} width="4" height="3" fill="#555" />))}
      </svg>
      <svg className={`${box} ml-[31px]`} width="32" height="30" viewBox="0 0 32 30">
        <path d="M1 5h11l3 3h16v20H1z" fill="#f3cf6a" stroke="#b08a28" />
        <rect x="6" y="2" width="20" height="8" fill="#fff" />
        <rect x="3" y="10" width="26" height="18" fill="#fbe39a" />
        <rect x="10" y="18" width="14" height="9" fill="#3a88c8" />
      </svg>
      <div className="ml-[16px] w-[56px] h-[39px] flex items-center justify-center border border-[#6a82a4] bg-[#2a4470] shrink-0">
        <svg width="30" height="32" viewBox="0 0 30 32"><ellipse cx="15" cy="16" rx="11" ry="13.5" fill="none" stroke="#e00f20" strokeWidth="7" /></svg>
      </div>
      <div className="ml-[6px] w-[57px] h-[39px] flex items-center justify-center border border-[#6a82a4] bg-[#2a4470] shrink-0">
        <svg width="32" height="32" viewBox="0 0 32 32" fill="none"><rect x="1" y="1" width="30" height="30" rx="5" fill="#cfe6fa" /><path d="M7 15a12 12 0 0 1 18 0M10.5 19a7 7 0 0 1 11 0" stroke="#2a9ae0" strokeWidth="2.5" /><circle cx="16" cy="23" r="2" fill="#2a9ae0" /></svg>
      </div>
      <div className="ml-[5px] w-[59px] h-[39px] flex items-center justify-center border border-[#90a4c0] bg-[#4a6590] shrink-0">
        <svg width="32" height="32" viewBox="0 0 32 32"><path d="M16 1l8 11H8z" fill="#3aa040" /><ellipse cx="16" cy="14" rx="9" ry="8" fill="#3aa040" /><ellipse cx="9" cy="24" rx="7" ry="6" fill="#e8b828" /><ellipse cx="23" cy="24" rx="7" ry="6" fill="#3a80d0" /><circle cx="16" cy="18" r="6" fill="#f0a020" /><text x="16" y="22" textAnchor="middle" fontSize="10" fontWeight="700" fill="#fff">5</text></svg>
      </div>

      <div className="ml-auto flex items-center shrink-0">
        <span className="text-[12px] mr-[18px]">EN</span>
        <div className="flex items-center gap-[12px]">
          <svg width="12" height="16" viewBox="0 0 12 16"><path d="M3.5 7V4a2.5 2.5 0 0 1 5 0v3" stroke="#eee" fill="none" /><rect x="1" y="7" width="10" height="8" fill="#e8e8e8" /></svg>
          <svg width="14" height="16" viewBox="0 0 14 16"><path d="M7 0l6 2v7c0 3-3 5-6 7-3-2-6-4-6-7V2z" fill="#0a9a80" /><path d="M4 8l2 2 4-4" stroke="#fff" fill="none" /></svg>
          <svg width="16" height="16" viewBox="0 0 16 16" fill="none"><rect width="16" height="16" rx="2" fill="#b8d8f0" /><path d="M3 7a7 7 0 0 1 10 0M5 10a4 4 0 0 1 6 0" stroke="#fff" /></svg>
          <svg width="16" height="16" viewBox="0 0 16 16"><circle cx="8" cy="8" r="8" fill="#1a90e8" /><path d="M9 2L5 9h3l-1 5 4-7H8z" fill="#fff" /></svg>
          <svg width="14" height="16" viewBox="0 0 14 16" fill="none"><circle cx="4" cy="4" r="2.5" stroke="#e8c050" strokeWidth="1.5" /><path d="M5 6l7 8M6 7l-1 8" stroke="#c8c8c8" strokeWidth="1.5" /></svg>
          <svg width="15" height="18" viewBox="0 0 15 18"><rect x="3" y="0" width="6" height="11" fill="#909090" /><circle cx="9" cy="12" r="5.5" fill="#2a9a3a" /><path d="M6.5 12l2 2 3-3" stroke="#fff" fill="none" /></svg>
          <svg width="17" height="17" viewBox="0 0 17 17"><circle cx="8.5" cy="8.5" r="8.5" fill="#2ab030" /><rect x="5" y="9" width="2" height="4" fill="#fff" /><rect x="8" y="6" width="2" height="7" fill="#fff" /><rect x="11" y="3" width="2" height="10" fill="#fff" /></svg>
          <svg width="15" height="18" viewBox="0 0 15 18"><path d="M2 1v17" stroke="#fff" strokeWidth="1.5" /><path d="M3 2h9v7H3z" fill="#f4f4f4" /><circle cx="10" cy="13" r="4.5" fill="#e02020" /><path d="M8 11l4 4M12 11l-4 4" stroke="#fff" /></svg>
        </div>
        <div className="ml-[8px] flex items-end gap-[1px] h-[14px]">
          <div className="w-[2px] h-[3px] bg-white" />
          <div className="w-[2px] h-[5px] bg-white" />
          <div className="w-[2px] h-[8px] bg-white" />
          <div className="w-[2px] h-[11px] bg-white" />
          <div className="w-[2px] h-[14px] bg-white" />
        </div>
        <svg className="ml-[10px]" width="13" height="16" viewBox="0 0 13 16"><path d="M1 5h3l4-4v14l-4-4H1z" fill="#eee" /><path d="M10 5a4 4 0 0 1 0 6" stroke="#eee" fill="none" /></svg>
        <svg className="ml-[9px]" width="15" height="17" viewBox="0 0 15 17"><rect x="2" y="5" width="11" height="8" rx="1" fill="#fff" /><path d="M5 1v4M10 1v4M7.5 13v4" stroke="#fff" strokeWidth="2" /></svg>
        <div className="w-[85px] ml-[-1px] flex flex-col items-center text-[12px] leading-[17px] pl-[6px]">
          <span>22:02</span>
          <span>10.06.2021</span>
        </div>
        <div className="w-[14px] h-[40px] border-l border-[#6a82a4] bg-[#355585]" />
      </div>
    </div>
  );
}

// ---------- page ----------
export default function App() {
  return (
    <div className="w-[1366px] h-[768px] overflow-hidden flex flex-col bg-[#f0f0f0] font-['Liberation_Sans',Arial,sans-serif] text-[11px]">
      <div className="h-[21px] flex items-start bg-[linear-gradient(to_right,rgba(255,255,255,0.75)_0%,rgba(255,255,255,0.35)_25%,rgba(255,255,255,0)_50%),linear-gradient(to_bottom,#1d4a86_0%,#5f86b6_45%,#dfe9f4_100%)]">
        <svg className="mt-[2px] ml-[2px] shrink-0" width="17" height="17" viewBox="0 0 32 32">
          <ellipse cx="16" cy="13" rx="10" ry="10" fill="#3aa040" />
          <ellipse cx="9" cy="23" rx="7" ry="6" fill="#e8b828" />
          <ellipse cx="23" cy="23" rx="7" ry="6" fill="#3a80d0" />
          <circle cx="16" cy="17" r="7" fill="#f0a020" />
          <text x="16" y="22" textAnchor="middle" fontSize="13" fontWeight="700" fill="#fff">5</text>
        </svg>
        <div className="ml-[1px] mt-[2px] w-[43px] h-[14px] bg-white rounded-[4px] blur-[1.5px]" />
        <span className="ml-[1px] mt-[3px] text-[12px] text-[#111] whitespace-nowrap">- AMPGlobalEU-Live - Netting - MESM21,M1</span>
        <div className="ml-auto mr-[1px] w-[105px] h-[15px] flex rounded-b-[5px] border border-t-0 border-[#dfe8f2] overflow-hidden bg-[#4a72a4]">
          <div className="w-[27px] flex items-center justify-center border-r border-[#dfe8f2]"><div className="w-0 h-0 border-x-[5px] border-x-transparent border-t-[6px] border-t-white" /></div>
          <div className="w-[26px] flex items-center justify-center border-r border-[#dfe8f2]">
            <svg width="11" height="11" viewBox="0 0 11 11"><rect x="4" y="1" width="6" height="6" fill="none" stroke="#fff" strokeWidth="1.5" /><rect x="1" y="4" width="6" height="6" fill="#fff" /></svg>
          </div>
          <div className="flex-1 flex items-center justify-center"><svg width="11" height="10" viewBox="0 0 11 10"><path d="M1 1l9 8M10 1L1 9" stroke="#fff" strokeWidth="2.5" /></svg></div>
        </div>
      </div>
      <div className="h-[21px] flex items-center gap-[20px] pl-[9px] text-[#111] border-b border-[#a8a8a8]">
        {['Файл', 'Вид', 'Вставка', 'Графики', 'Сервис', 'Окно', 'Справка'].map((m) => (
          <span key={m}>{m}</span>
        ))}
      </div>
      <Toolbar />
      <div className="h-[496px] flex">
        <LeftWindow />
        <RightWindow />
      </div>
      <div className="h-[18px] flex items-center border-t border-black bg-[#f0f0f0]">
        <div className="ml-[3px] w-[85px] h-[18px] -mt-px bg-white border-x border-b border-black flex items-center justify-center text-black">MESM21,M1</div>
        <span className="ml-[13px] text-[#808890]">EPM21,M1</span>
        <div className="ml-auto mr-[12px] flex gap-[13px] text-[7px] text-[#888]"><span>◀</span><span>▶</span></div>
      </div>
      <Toolbox />
      <StatusBar />
      <Taskbar />
    </div>
  );
}
